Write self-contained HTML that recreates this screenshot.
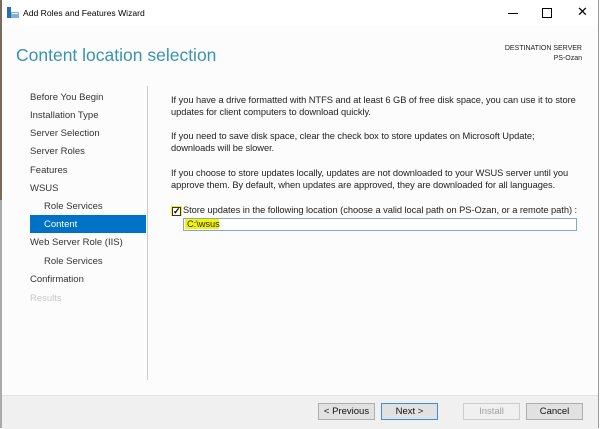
<!DOCTYPE html>
<html><head><style>
body{margin:0;width:602px;height:428px;overflow:hidden;background:#fff;font-family:"Liberation Sans",sans-serif;position:relative}
.abs{position:absolute}
.nav{position:absolute;left:30px;font-size:9.5px;color:#333;white-space:nowrap}
.p{position:absolute;left:171px;font-size:9.3px;color:#222;line-height:12px;white-space:nowrap;letter-spacing:-0.05px}
.btn{position:absolute;top:403px;height:15px;width:55px;border:1px solid #adadad;background:#e1e1e1;font-size:9.5px;text-align:center;line-height:15px;color:#111}
</style></head><body>
<div class="abs" style="left:0;top:0;width:2px;height:428px;background:#7a6a5a"></div>
<div class="abs" style="left:0;top:200px;width:2px;height:228px;background:#aaa"></div>
<div class="abs" style="left:2px;top:0;width:596px;height:428px;background:#fcfcfc;border-right:1px solid #999"></div>
<div class="abs" style="left:2px;top:0;width:596px;height:26px;background:#fff"></div>
<svg class="abs" style="left:7px;top:7px" width="12" height="11"><rect x="0" y="0" width="4" height="11" fill="#2a6fb0"/><rect x="4" y="5" width="8" height="6" fill="#7fb0d8"/><rect x="5" y="6" width="6" height="1" fill="#fff"/></svg>
<div class="abs" style="left:23px;top:8px;font-size:8.6px;color:#000">Add Roles and Features Wizard</div>
<div class="abs" style="left:508px;top:13px;width:10px;height:1px;background:#000"></div>
<div class="abs" style="left:542px;top:8px;width:8px;height:8px;border:1px solid #000"></div>
<div class="abs" style="left:577px;top:4px;font-size:13px;color:#000">✕</div>
<div class="abs" style="left:16px;top:45px;font-size:17.5px;color:#3a93b0">Content location selection</div>
<div class="abs" style="right:20px;top:44px;font-size:7px;color:#222;text-align:right;line-height:10px">DESTINATION SERVER<br>PS-Ozan</div>
<div class="nav" style="top:92px">Before You Begin</div>
<div class="nav" style="top:110px">Installation Type</div>
<div class="nav" style="top:128px">Server Selection</div>
<div class="nav" style="top:146px">Server Roles</div>
<div class="nav" style="top:165px">Features</div>
<div class="nav" style="top:183px">WSUS</div>
<div class="nav" style="top:201px;left:44px">Role Services</div>
<div class="abs" style="left:30px;top:215px;width:116px;height:18px;background:#0072c6"></div>
<div class="nav" style="top:219px;left:44px;color:#fff">Content</div>
<div class="nav" style="top:237px">Web Server Role (IIS)</div>
<div class="nav" style="top:256px;left:44px">Role Services</div>
<div class="nav" style="top:274px">Confirmation</div>
<div class="nav" style="top:293px;color:#c8c8c8">Results</div>
<div class="abs" style="left:147px;top:86px;width:1px;height:294px;background:#ccc"></div>
<div class="p" style="top:94px">If you have a drive formatted with NTFS and at least 6 GB of free disk space, you can use it to store<br>updates for client computers to download quickly.</div>
<div class="p" style="top:130px">If you need to save disk space, clear the check box to store updates on Microsoft Update;<br>downloads will be slower.</div>
<div class="p" style="top:167px">If you choose to store updates locally, updates are not downloaded to your WSUS server until you<br>approve them. By default, when updates are approved, they are downloaded for all languages.</div>
<div class="abs" style="left:171px;top:206px;width:11px;height:10px;background:#f2f200"></div>
<div class="abs" style="left:172px;top:207px;width:7px;height:7px;border:1px solid #333;background:#fff;font-size:9px;line-height:7px;text-align:center;font-weight:bold">✓</div>
<div class="p" style="left:183px;top:204px">Store updates in the following location (choose a valid local path on PS-Ozan, or a remote path) :</div>
<div class="abs" style="left:183px;top:218px;width:392px;height:11px;border:1px solid #7fa9d4;background:#fff"></div>
<div class="abs" style="left:185px;top:219px;width:34px;height:10px;background:#f5f500"></div>
<div class="p" style="left:187px;top:218px">C:\wsus</div>
<div class="abs" style="left:2px;top:395px;width:596px;height:33px;background:#f0f0f0;border-top:1px solid #e4e4e4"></div>
<div class="btn" style="left:318px">&lt; Previous</div>
<div class="btn" style="left:381px;border-color:#3c8fd8">Next &gt;</div>
<div class="btn" style="left:463px;background:#f0f0f0;border-color:#ccc;color:#a0a0a0">Install</div>
<div class="btn" style="left:526px">Cancel</div>
</body></html>
